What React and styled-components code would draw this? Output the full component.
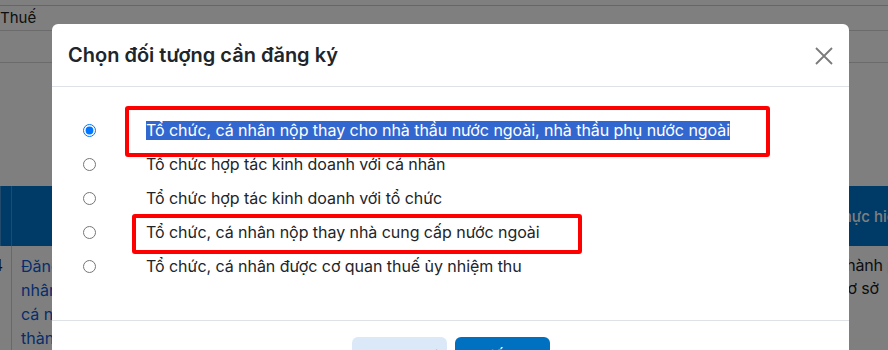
import styled, { createGlobalStyle } from "styled-components";
import { ChevronLeft, ChevronRight } from "lucide-react";

const options = [
  "Tổ chức, cá nhân nộp thay cho nhà thầu nước ngoài, nhà thầu phụ nước ngoài",
  "Tổ chức hợp tác kinh doanh với cá nhân",
  "Tổ chức hợp tác kinh doanh với tổ chức",
  "Tổ chức, cá nhân nộp thay nhà cung cấp nước ngoài",
  "Tổ chức, cá nhân được cơ quan thuế ủy nhiệm thu",
];

const GlobalStyle = createGlobalStyle`
  html, body {
    margin: 0;
    padding: 0;
  }
  body {
    width: 888px;
    height: 350px;
    overflow: hidden;
    background: #fff;
    font-family: Inter, "Noto Sans", sans-serif;
    color: #212529;
  }
`;

export default function App() {
  const selected = 0;

  return (
    <>
      <GlobalStyle />
      <Page>
        <TopStrip />
        <FilterLabel>Thuế</FilterLabel>
        <FilterBox />
        <Spacer />
        <TableHead>
          <HeadCell />
          <HeadCell />
          <HeadCell />
          <HeadCell $last>Thực hiện</HeadCell>
        </TableHead>
        <TableRow>
          <IndexCell>4</IndexCell>
          <LinkCell>
            Đăng ký thuế
            <br />
            nhân kinh doanh
            <br />
            cá nhân nộp thay
            <br />
            thành viên
          </LinkCell>
          <BodyCell />
          <BodyCell $last>
            Thành phố
            <br />
            Cơ sở
          </BodyCell>
        </TableRow>

        <Backdrop />

        <Modal>
          <ModalHeader>
            <ModalTitle>Chọn đối tượng cần đăng ký</ModalTitle>
            <CloseButton aria-label="Đóng">
              <svg width="18" height="18" viewBox="0 0 18 18">
                <path
                  d="M1 1 17 17M17 1 1 17"
                  stroke="#7a7a7a"
                  strokeWidth="1.8"
                  fill="none"
                />
              </svg>
            </CloseButton>
          </ModalHeader>

          <ModalBody>
            {options.map((label, index) => (
              <OptionRow key={label}>
                <Radio
                  type="radio"
                  name="doituong"
                  defaultChecked={index === selected}
                />
                <OptionText $selected={index === selected}>{label}</OptionText>
              </OptionRow>
            ))}
            <Annotation $left={73} $top={19} $width={645} $height={51} />
            <Annotation $left={80} $top={127} $width={450} $height={40} />
          </ModalBody>

          <ModalFooter>
            <Button $variant="light">
              <ChevronLeft size={14} strokeWidth={2.5} />
              Quay lại
            </Button>
            <Button $variant="primary">
              <ChevronRight size={14} strokeWidth={2.5} />
              Tiếp tục
            </Button>
          </ModalFooter>
        </Modal>
      </Page>
    </>
  );
}

const Page = styled.div`
  position: relative;
  width: 888px;
  height: 350px;
  overflow: hidden;
  display: flex;
  flex-direction: column;
`;

const TopStrip = styled.div`
  height: 5px;
  border-bottom: 1px solid #cdcdcd;
`;

const FilterLabel = styled.div`
  height: 24px;
  display: flex;
  align-items: center;
  font-size: 15px;
  color: #1c1c1c;
  border-bottom: 1px solid #d6d6d6;
`;

const FilterBox = styled.div`
  height: 32px;
  border-bottom: 1px solid #d6d6d6;
`;

const Spacer = styled.div`
  height: 124px;
`;

const columns = "11px 160px 662px 200px";

const TableHead = styled.div`
  display: grid;
  grid-template-columns: ${columns};
  height: 60px;
  background: #0074cc;
`;

const HeadCell = styled.div`
  display: flex;
  align-items: center;
  padding-left: ${(props) => (props.$last ? "0" : "9px")};
  font-size: 15px;
  font-weight: 500;
  color: #fff;
  border-left: ${(props) =>
    props.$last ? "none" : "1px solid rgba(255, 255, 255, 0.25)"};
  white-space: nowrap;
`;

const TableRow = styled.div`
  display: grid;
  grid-template-columns: ${columns};
  flex: 1;
`;

const BodyCell = styled.div`
  padding: 8px 0 0 ${(props) => (props.$last ? "3px" : "9px")};
  font-size: 16px;
  line-height: 23px;
  letter-spacing: ${(props) => (props.$last ? "-0.2px" : "normal")};
  color: #1a1a1a;
  border-left: ${(props) => (props.$last ? "none" : "1px solid #d0d0d0")};
  white-space: nowrap;
`;

const IndexCell = styled(BodyCell)`
  border-left: none;
  padding: 8px 8px 0 0;
  display: flex;
  justify-content: flex-end;
  align-items: flex-start;
`;

const LinkCell = styled(BodyCell)`
  color: #0d5ad8;
  line-height: 24px;
`;

const Backdrop = styled.div`
  position: absolute;
  inset: 0;
  background: rgba(0, 0, 0, 0.5);
`;

const Modal = styled.div`
  position: absolute;
  left: 52px;
  top: 24px;
  width: 797px;
  background: #fff;
  border-radius: 6px;
  display: flex;
  flex-direction: column;
`;

const ModalHeader = styled.div`
  height: 62px;
  display: flex;
  align-items: center;
  justify-content: space-between;
  padding: 0 16px;
  border-bottom: 1px solid #dee2e6;
`;

const ModalTitle = styled.h5`
  margin: 0;
  font-size: 20px;
  font-weight: 600;
  color: #212529;
`;

const CloseButton = styled.button`
  border: none;
  background: transparent;
  padding: 0;
  display: flex;
  margin-top: 2px;
`;

const ModalBody = styled.div`
  position: relative;
  padding: 26px 0 37px 31px;
  display: flex;
  flex-direction: column;
`;

const OptionRow = styled.label`
  height: 34px;
  display: flex;
  align-items: center;
  gap: 50px;
`;

const Radio = styled.input`
  margin: 0;
  width: 13px;
  height: 13px;
  flex-shrink: 0;
`;

const OptionText = styled.span`
  font-size: 16px;
  line-height: 19px;
  letter-spacing: -0.05px;
  color: ${(props) => (props.$selected ? "#fff" : "#212529")};
  background: ${(props) => (props.$selected ? "#3367d0" : "transparent")};
`;

const Annotation = styled.div`
  position: absolute;
  left: ${(props) => props.$left}px;
  top: ${(props) => props.$top}px;
  width: ${(props) => props.$width}px;
  height: ${(props) => props.$height}px;
  box-sizing: border-box;
  border: 4px solid #ff0000;
  border-radius: 3px;
  pointer-events: none;
`;

const ModalFooter = styled.div`
  border-top: 1px solid #dee2e6;
  padding: 16px;
  display: flex;
  justify-content: center;
  gap: 8px;
`;

const Button = styled.button`
  width: 95px;
  height: 38px;
  border: none;
  border-radius: 6px;
  display: flex;
  align-items: center;
  justify-content: center;
  gap: 4px;
  font-family: inherit;
  font-size: 16px;
  background: ${(props) => (props.$variant === "primary" ? "#0070c0" : "#dbe8f7")};
  color: ${(props) => (props.$variant === "primary" ? "#fff" : "#0d5ad8")};
`;
